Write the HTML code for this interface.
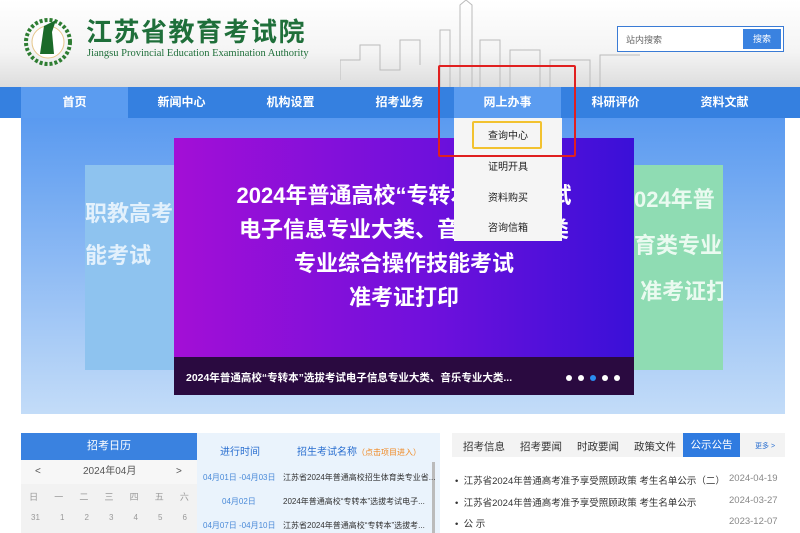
<!DOCTYPE html>
<html><head><meta charset="utf-8"><style>
*{margin:0;padding:0;box-sizing:border-box}
body{width:800px;height:533px;overflow:hidden;background:#fff;font-family:"Liberation Sans","Noto Sans CJK SC",sans-serif;position:relative}
.a{position:absolute}
.hdr{left:0;top:0;width:800px;height:87px;background:linear-gradient(#fff 0%,#f4f4f4 60%,#ddd 100%)}
.nav{left:0;top:87px;width:800px;height:31px;background:#3580e0}
.nav span{position:absolute;top:0;height:31px;line-height:31px;color:#fff;font-size:12px;font-weight:bold;text-align:center;width:107px}
.ban{left:21px;top:118px;width:764px;height:296px;background:linear-gradient(#5a9af0,#c3dcf8)}
.dd div{position:absolute;left:0;width:108px;text-align:center;font-size:10px;color:#222}
</style></head><body>
<div class="a hdr"></div>
<svg class="a" style="left:340px;top:0" width="300" height="87"><g stroke="#bbb" fill="none" stroke-width="1"><path d="M0 80 L0 60 L20 60 L20 45 L40 45 L40 70 L60 70 L60 40 L80 40 L80 65 M100 87 L100 30 L110 30 L110 87 M120 87 L120 5 L126 0 L132 5 L132 87 M140 87 L140 40 L160 40 L160 87 M170 87 L170 50 L200 50 L200 87 M210 87 L210 60 L250 60 L250 87 M260 87 L260 55 L300 55"/></g></svg>
<svg class="a" style="left:22px;top:12px" width="52" height="56"><circle cx="26" cy="30" r="22" fill="none" stroke="#2e7d32" stroke-width="4" stroke-dasharray="3 2"/><circle cx="26" cy="30" r="16" fill="#fff" stroke="#e6c68a"/><path d="M18 42 L22 14 L34 8 L30 20 L32 42Z" fill="#1b6b2a"/></svg>
<div class="a" style="left:86px;top:16px;font-size:26px;font-weight:bold;color:#1f6f3a;letter-spacing:1.5px;font-family:'Noto Sans CJK SC',sans-serif;line-height:30px">江苏省教育考试院</div>
<div class="a" style="left:87px;top:48px;font-size:10.5px;color:#1f6f3a;font-family:'Liberation Serif',serif">Jiangsu Provincial Education Examination Authority</div>
<div class="a" style="left:617px;top:26px;width:167px;height:26px;border:1px solid #3a7bd5;background:#fff"></div>
<div class="a" style="left:626px;top:33px;font-size:9px;color:#666">站内搜索</div>
<div class="a" style="left:743px;top:29px;width:38px;height:20px;background:#3a82e0;color:#fff;font-size:9px;text-align:center;line-height:20px">搜索</div>
<div class="a nav">
<span style="left:21px;background:#5b9cf0">首页</span>
<span style="left:128px">新闻中心</span>
<span style="left:237px">机构设置</span>
<span style="left:346px">招考业务</span>
<span style="left:454px;background:#5b9cf0">网上办事</span>
<span style="left:562px">科研评价</span>
<span style="left:671px">资料文献</span>
</div>
<div class="a ban"></div>
<div class="a" style="left:85px;top:165px;width:89px;height:205px;background:#8ec3ef"></div>
<div class="a" style="left:85px;top:196px;font-size:22px;font-weight:bold;color:#e3f1fc;white-space:nowrap;width:89px;overflow:hidden">职教高考</div>
<div class="a" style="left:85px;top:238px;font-size:22px;font-weight:bold;color:#e3f1fc">能考试</div>
<div class="a" style="left:634px;top:165px;width:89px;height:205px;background:#8fdcb3;overflow:hidden;font-size:22px;font-weight:bold;color:#eafaf0;line-height:46px;white-space:nowrap;padding-top:12px">024年普<br>育类专业<br>&nbsp;准考证打</div>
<div class="a" style="left:174px;top:138px;width:460px;height:257px;background:linear-gradient(90deg,#a30fd6,#7010dc 55%,#3a10d8);overflow:hidden">
<div style="position:absolute;top:41px;width:460px;text-align:center;color:#fff;font-weight:bold;font-size:22px;line-height:34px">2024年普通高校“专转本”选拔考试<br>电子信息专业大类、音乐专业大类<br>专业综合操作技能考试<br>准考证打印</div>
<div style="position:absolute;left:0;top:219px;width:460px;height:38px;background:#2a0a40"></div>
<div style="position:absolute;left:12px;top:232px;color:#fff;font-size:10.5px;font-weight:bold">2024年普通高校“专转本”选拔考试电子信息专业大类、音乐专业大类...</div>
<div style="position:absolute;left:392px;top:237px;font-size:0">
<span style="display:inline-block;width:6px;height:6px;border-radius:3px;background:#fff;margin-right:6px"></span><span style="display:inline-block;width:6px;height:6px;border-radius:3px;background:#fff;margin-right:6px"></span><span style="display:inline-block;width:6px;height:6px;border-radius:3px;background:#2a8cf0;margin-right:6px"></span><span style="display:inline-block;width:6px;height:6px;border-radius:3px;background:#fff;margin-right:6px"></span><span style="display:inline-block;width:6px;height:6px;border-radius:3px;background:#fff"></span></div>
</div>
<div class="a dd" style="left:454px;top:118px;width:108px;height:123px;background:#f5f5f5">
<div style="top:9px">查询中心</div><div style="top:40px">证明开具</div><div style="top:71px">资料购买</div><div style="top:101px">咨询信箱</div>
</div>
<div class="a" style="left:472px;top:121px;width:70px;height:28px;border:2px solid #f2c230;border-radius:2px"></div>
<div class="a" style="left:438px;top:65px;width:138px;height:92px;border:2px solid #e02020;border-radius:2px"></div>
<div class="a" style="left:21px;top:433px;width:176px;height:27px;background:#3a82e0;color:#fff;font-size:11px;text-align:center;line-height:27px">招考日历</div>
<div class="a" style="left:21px;top:460px;width:176px;height:73px;background:#f2f2f2"></div>
<div class="a" style="left:21px;top:460px;width:176px;height:24px;background:#f7f7f7;font-size:10px;color:#555;line-height:24px"><span style="position:absolute;left:14px">&lt;</span><span style="position:absolute;left:62px">2024年04月</span><span style="position:absolute;left:155px">&gt;</span></div>
<div class="a" style="left:21px;top:490px;width:176px;font-size:9px;color:#999;display:flex;justify-content:space-around">
<span>日</span><span>一</span><span>二</span><span>三</span><span>四</span><span>五</span><span>六</span></div>
<div class="a" style="left:21px;top:513px;width:176px;font-size:8px;color:#999;display:flex;justify-content:space-around">
<span>31</span><span>1</span><span>2</span><span>3</span><span>4</span><span>5</span><span>6</span></div>
<div class="a" style="left:197px;top:433px;width:243px;height:100px;background:#eaf3fc"></div>
<div class="a" style="left:220px;top:443px;font-size:10px;color:#2a6fd0">进行时间</div>
<div class="a" style="left:297px;top:443px;font-size:10px;color:#2a6fd0">招生考试名称<span style="color:#f08a24;font-size:8px">（点击项目进入）</span></div>
<div class="a" style="left:432px;top:462px;width:3px;height:71px;background:#bbb"></div>
<div class="a" style="left:203px;top:472px;font-size:8px;color:#4a8ad8">04月01日 -04月03日</div>
<div class="a" style="left:283px;top:472px;font-size:8px;color:#333">江苏省2024年普通高校招生体育类专业省...</div>
<div class="a" style="left:222px;top:496px;font-size:8px;color:#4a8ad8">04月02日</div>
<div class="a" style="left:283px;top:496px;font-size:8px;color:#333">2024年普通高校“专转本”选拔考试电子...</div>
<div class="a" style="left:203px;top:520px;font-size:8px;color:#4a8ad8">04月07日 -04月10日</div>
<div class="a" style="left:283px;top:520px;font-size:8px;color:#333">江苏省2024年普通高校“专转本”选拔考...</div>
<div class="a" style="left:452px;top:433px;width:333px;height:24px;background:#f3f3f3"></div>
<div class="a" style="left:463px;top:439px;font-size:10.5px;color:#333">招考信息</div>
<div class="a" style="left:520px;top:439px;font-size:10.5px;color:#333">招考要闻</div>
<div class="a" style="left:577px;top:439px;font-size:10.5px;color:#333">时政要闻</div>
<div class="a" style="left:634px;top:439px;font-size:10.5px;color:#333">政策文件</div>
<div class="a" style="left:683px;top:433px;width:57px;height:24px;background:#2f7be0;color:#fff;font-size:10.5px;line-height:24px;text-align:center">公示公告</div>
<div class="a" style="left:755px;top:441px;font-size:7px;color:#2a6fd0">更多 &gt;</div>
<div class="a" style="left:455px;top:473px;font-size:9.5px;color:#333">•&nbsp; 江苏省2024年普通高考准予享受照顾政策 考生名单公示（二）</div>
<div class="a" style="left:729px;top:473px;font-size:9.5px;color:#888">2024-04-19</div>
<div class="a" style="left:455px;top:495px;font-size:9.5px;color:#333">•&nbsp; 江苏省2024年普通高考准予享受照顾政策 考生名单公示</div>
<div class="a" style="left:729px;top:495px;font-size:9.5px;color:#888">2024-03-27</div>
<div class="a" style="left:455px;top:516px;font-size:9.5px;color:#333">•&nbsp; 公 示</div>
<div class="a" style="left:729px;top:516px;font-size:9.5px;color:#888">2023-12-07</div>
</body></html>
